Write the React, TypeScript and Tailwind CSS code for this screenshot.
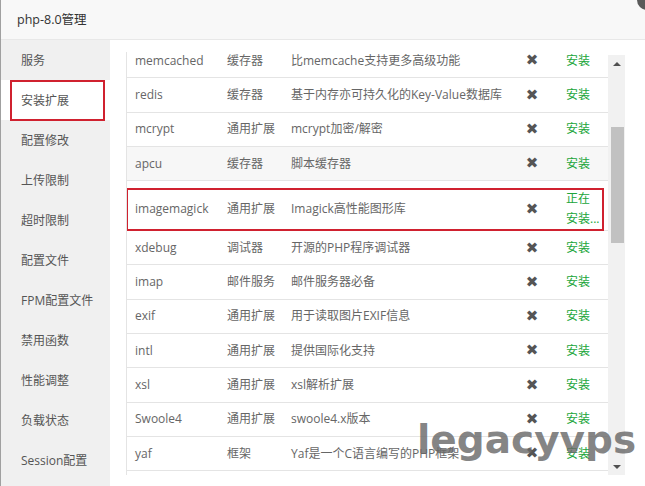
import React from "react";

const FONT = { fontFamily: '"Open Sans", "Noto Sans CJK SC", sans-serif' };

const menu = [
  "服务",
  "安装扩展",
  "配置修改",
  "上传限制",
  "超时限制",
  "配置文件",
  "FPM配置文件",
  "禁用函数",
  "性能调整",
  "负载状态",
  "Session配置",
];

type Ext = { name: string; type: string; desc: string; busy?: boolean; shade?: boolean };

const exts: Ext[] = [
  { name: "memcached", type: "缓存器", desc: "比memcache支持更多高级功能" },
  { name: "redis", type: "缓存器", desc: "基于内存亦可持久化的Key-Value数据库" },
  { name: "mcrypt", type: "通用扩展", desc: "mcrypt加密/解密" },
  { name: "apcu", type: "缓存器", desc: "脚本缓存器", shade: true },
  { name: "imagemagick", type: "通用扩展", desc: "Imagick高性能图形库", busy: true },
  { name: "xdebug", type: "调试器", desc: "开源的PHP程序调试器" },
  { name: "imap", type: "邮件服务", desc: "邮件服务器必备" },
  { name: "exif", type: "通用扩展", desc: "用于读取图片EXIF信息" },
  { name: "intl", type: "通用扩展", desc: "提供国际化支持" },
  { name: "xsl", type: "通用扩展", desc: "xsl解析扩展" },
  { name: "Swoole4", type: "通用扩展", desc: "swoole4.x版本" },
  { name: "yaf", type: "框架", desc: "Yaf是一个C语言编写的PHP框架" },
];

function Row({ ext }: { ext: Ext }) {
  return (
    <div
      className={`relative flex items-center border-b border-[#e4e4e4] text-[12px] text-[#666] ${
        ext.busy ? "h-[50px] pt-[7px]" : "h-[34.3px]"
      } ${ext.shade ? "bg-[#f7f7f7]" : "bg-white"}`}
    >
      <div className="w-[92px] shrink-0 pl-[8px]">{ext.name}</div>
      <div className="w-[64px] shrink-0 pl-[8px]">{ext.type}</div>
      <div className="w-[234px] shrink-0 pl-[8px] whitespace-nowrap">{ext.desc}</div>
      <div
        className="w-[30px] shrink-0 text-center text-[15px] text-[#555]"
        style={{ fontFamily: '"DejaVu Sans", sans-serif' }}
      >
        ✖
      </div>
      <div className="w-[61px] shrink-0 pl-[19px] leading-[20px] text-[#20a53a]">
        {ext.busy ? (
          <>
            正在
            <br />
            安装...
          </>
        ) : (
          "安装"
        )}
      </div>
      {ext.busy && (
        <span className="pointer-events-none absolute left-[-1px] right-[4px] top-[7px] bottom-[-1px] border-2 border-[#d0212f]" />
      )}
    </div>
  );
}

export default function App() {
  return (
    <div
      className="relative h-[486px] w-[645px] overflow-hidden border-l border-[#a0a0a0] bg-white"
      style={FONT}
    >
      {/* Title bar */}
      <div className="flex h-[40px] items-center border-b border-[#e8e8e8] bg-[#f8f8f8] pl-[16px] pt-[1px] text-[12.5px] text-[#333]">
        php-8.0管理
      </div>

      <div className="flex h-[446px]">
        {/* Sidebar */}
        <div className="w-[109px] shrink-0 bg-[#f0f0f0]">
          {menu.map((m, i) => (
            <div
              key={m}
              className={`relative flex h-[40px] items-center pl-[20px] pt-[2px] text-[12px] text-[#555] ${
                i === 1 ? "bg-white" : ""
              }`}
            >
              {m}
              {i === 1 && (
                <span className="pointer-events-none absolute left-[9px] right-[5px] top-0 bottom-[-1px] border-2 border-[#d0212f]" />
              )}
            </div>
          ))}
        </div>

        {/* Main */}
        <div className="flex-1 pl-[16px] pt-[12px]">
          <div className="flex h-[423px]">
            <div className="w-[482px] shrink-0 overflow-hidden border-l border-[#e4e4e4]">
              <div className="mt-[-8px]">
                {exts.map((e) => (
                  <Row key={e.name} ext={e} />
                ))}
              </div>
            </div>
            {/* Scrollbar */}
            <div className="mt-[3px] flex w-[17px] shrink-0 flex-col bg-[#f1f1f1]">
              <div className="flex h-[17px] items-center justify-center">
                <span className="h-0 w-0 border-x-[4px] border-b-[4px] border-x-transparent border-b-[#505050]" />
              </div>
              <div className="ml-[3px] mt-[55px] h-[116px] w-[13px] bg-[#c1c1c1]" />
              <div className="flex-1" />
              <div className="flex h-[17px] items-center justify-center">
                <span className="h-0 w-0 border-x-[4px] border-t-[4px] border-x-transparent border-t-[#505050]" />
              </div>
            </div>
          </div>
        </div>
      </div>

      {/* Close button peeking in the corner */}
      <span className="absolute left-[636px] top-[-10px] h-[20px] w-[20px] rounded-full bg-[#5a5a5a]" />

      {/* Watermark */}
      <div
        className="pointer-events-none absolute left-[416px] top-[420px] text-[39px] font-bold leading-none text-[rgba(105,105,105,0.82)]"
        style={{ fontFamily: '"DejaVu Sans", sans-serif' }}
      >
        legacyvps
      </div>
    </div>
  );
}
